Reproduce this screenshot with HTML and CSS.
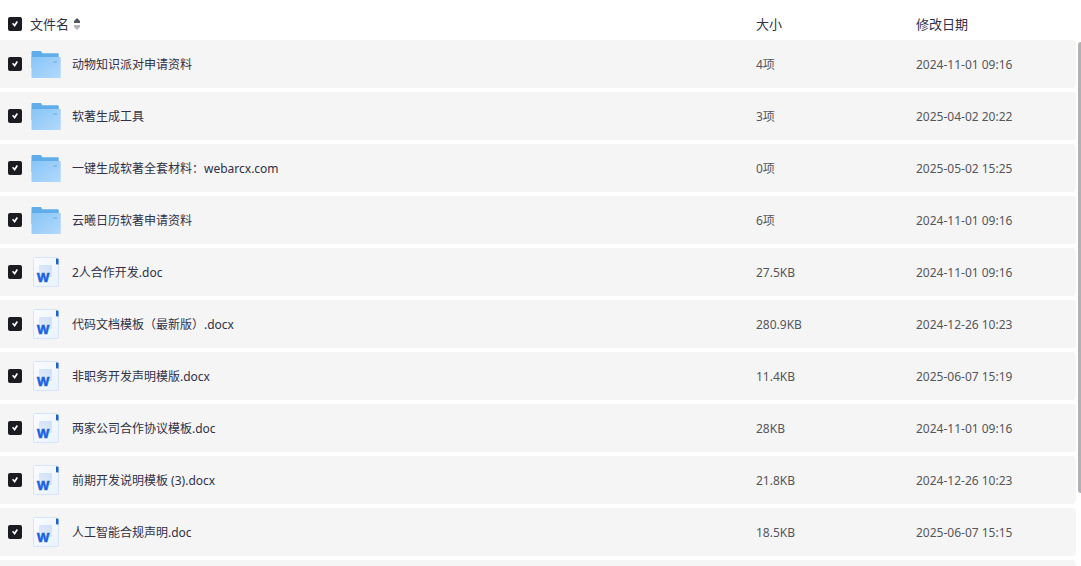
FILE: index.html
```html
<!DOCTYPE html>
<html lang="zh-CN">
<head>
    <meta charset="UTF-8">
    <meta name="viewport" content="width=device-width, initial-scale=1.0">
    <title>文件列表</title>
    <link rel="stylesheet" href="styles.css">
</head>
<body>
    <!-- Shared icons -->
    <svg class="icon-defs" width="0" height="0" aria-hidden="true">
        <defs>
            <linearGradient id="folderFront" x1="0" y1="0" x2="1" y2="1">
                <stop offset="0" stop-color="#88c4f7"/>
                <stop offset="1" stop-color="#b2d9fb"/>
            </linearGradient>
            <linearGradient id="docPage" x1="0" y1="0" x2="1" y2="1">
                <stop offset="0" stop-color="#fafcfe"/>
                <stop offset="1" stop-color="#ebf2fd"/>
            </linearGradient>
            <linearGradient id="docSquare" x1="1" y1="0" x2="0" y2="1">
                <stop offset="0" stop-color="#cfdff7"/>
                <stop offset="1" stop-color="#e4edfb"/>
            </linearGradient>
            <symbol id="folder" viewBox="0 0 32 32">
                <path d="M1.5 4a1 1 0 0 1 1-1h8.3l1.6 2.2h15.3a1 1 0 0 1 1 1V20H1.5z" fill="#60adea"/>
                <path d="M1.5 9H30a.7.7 0 0 1 .7.7v19.6a.7.7 0 0 1-.7.7H2.2a.7.7 0 0 1-.7-.7z" fill="url(#folderFront)"/>
                <path d="M23 13h4v2h-4z" fill="#83bdf0"/>
            </symbol>
            <symbol id="doc" viewBox="0 0 32 32">
                <rect x="3.5" y="1.5" width="25" height="29" rx="1" fill="url(#docPage)" stroke="#d5e4f9"/>
                <path d="M26 2.5h1.5l1 1v5H27a1 1 0 0 1-1-1z" fill="#1e5fc9"/>
                <rect x="9" y="9" width="13" height="12" fill="url(#docSquare)"/>
                <text x="7" y="26" class="doc-letter">W</text>
            </symbol>
        </defs>
    </svg>

    <div class="file-panel">
        <table class="file-table">
            <colgroup>
                <col class="col-check">
                <col>
                <col class="col-size">
                <col class="col-date">
            </colgroup>
            <thead>
                <tr>
                    <th class="check-cell"><input type="checkbox" id="checkAll" checked></th>
                    <th>
                        <div class="head-name">
                            <label for="checkAll">文件名</label>
                            <button type="button" class="sort-button" aria-label="排序">
                                <svg width="8" height="12" viewBox="0 0 8 12">
                                    <path d="M4 0L7 3V5H1V3z" fill="#55565e"/>
                                    <path d="M4 12L7 9V7H1v2z" fill="#b5b5b8"/>
                                </svg>
                            </button>
                        </div>
                    </th>
                    <th>大小</th>
                    <th>修改日期</th>
                </tr>
            </thead>
            <tbody>
                <tr>
                    <td class="check-cell"><input type="checkbox" id="file1" checked></td>
                    <td><div class="file-name"><svg class="file-icon"><use href="#folder"/></svg><label for="file1">动物知识派对申请资料</label></div></td>
                    <td class="info-cell">4项</td>
                    <td class="info-cell">2024-11-01 09:16</td>
                </tr>
                <tr>
                    <td class="check-cell"><input type="checkbox" id="file2" checked></td>
                    <td><div class="file-name"><svg class="file-icon"><use href="#folder"/></svg><label for="file2">软著生成工具</label></div></td>
                    <td class="info-cell">3项</td>
                    <td class="info-cell">2025-04-02 20:22</td>
                </tr>
                <tr>
                    <td class="check-cell"><input type="checkbox" id="file3" checked></td>
                    <td><div class="file-name"><svg class="file-icon"><use href="#folder"/></svg><label for="file3">一键生成软著全套材料：webarcx.com</label></div></td>
                    <td class="info-cell">0项</td>
                    <td class="info-cell">2025-05-02 15:25</td>
                </tr>
                <tr>
                    <td class="check-cell"><input type="checkbox" id="file4" checked></td>
                    <td><div class="file-name"><svg class="file-icon"><use href="#folder"/></svg><label for="file4">云曦日历软著申请资料</label></div></td>
                    <td class="info-cell">6项</td>
                    <td class="info-cell">2024-11-01 09:16</td>
                </tr>
                <tr>
                    <td class="check-cell"><input type="checkbox" id="file5" checked></td>
                    <td><div class="file-name"><svg class="file-icon"><use href="#doc"/></svg><label for="file5">2人合作开发.doc</label></div></td>
                    <td class="info-cell">27.5KB</td>
                    <td class="info-cell">2024-11-01 09:16</td>
                </tr>
                <tr>
                    <td class="check-cell"><input type="checkbox" id="file6" checked></td>
                    <td><div class="file-name"><svg class="file-icon"><use href="#doc"/></svg><label for="file6">代码文档模板（最新版）.docx</label></div></td>
                    <td class="info-cell">280.9KB</td>
                    <td class="info-cell">2024-12-26 10:23</td>
                </tr>
                <tr>
                    <td class="check-cell"><input type="checkbox" id="file7" checked></td>
                    <td><div class="file-name"><svg class="file-icon"><use href="#doc"/></svg><label for="file7">非职务开发声明模版.docx</label></div></td>
                    <td class="info-cell">11.4KB</td>
                    <td class="info-cell">2025-06-07 15:19</td>
                </tr>
                <tr>
                    <td class="check-cell"><input type="checkbox" id="file8" checked></td>
                    <td><div class="file-name"><svg class="file-icon"><use href="#doc"/></svg><label for="file8">两家公司合作协议模板.doc</label></div></td>
                    <td class="info-cell">28KB</td>
                    <td class="info-cell">2024-11-01 09:16</td>
                </tr>
                <tr>
                    <td class="check-cell"><input type="checkbox" id="file9" checked></td>
                    <td><div class="file-name"><svg class="file-icon"><use href="#doc"/></svg><label for="file9">前期开发说明模板 (3).docx</label></div></td>
                    <td class="info-cell">21.8KB</td>
                    <td class="info-cell">2024-12-26 10:23</td>
                </tr>
                <tr>
                    <td class="check-cell"><input type="checkbox" id="file10" checked></td>
                    <td><div class="file-name"><svg class="file-icon"><use href="#doc"/></svg><label for="file10">人工智能合规声明.doc</label></div></td>
                    <td class="info-cell">18.5KB</td>
                    <td class="info-cell">2025-06-07 15:15</td>
                </tr>
                <tr>
                    <td class="check-cell"></td>
                    <td></td>
                    <td></td>
                    <td></td>
                </tr>
            </tbody>
        </table>
        <div class="scroll-track">
            <div class="scroll-thumb"></div>
        </div>
    </div>
</body>
</html>
```
FILE: styles.css
```css
* {
    box-sizing: border-box;
}
body {
    margin: 0;
    font-family: "Noto Sans", "Noto Sans CJK SC", sans-serif;
    font-size: 12px;
    line-height: 16px;
    color: #303048;
    background-color: #ffffff;
}
.icon-defs {
    display: block;
}
.file-panel {
    display: flex;
    align-items: flex-start;
    gap: 2px;
    height: 100vh;
    overflow: hidden;
}
.file-table {
    flex: 1;
    table-layout: fixed;
    border-collapse: separate;
    border-spacing: 0 4px;
}
.col-check {
    width: 30px;
}
.col-size,
.col-date {
    width: 160px;
}
th {
    height: 32px;
    padding: 8px 0 0;
    font-size: 13px;
    font-weight: 400;
    text-align: left;
    vertical-align: middle;
}
td {
    height: 48px;
    padding: 0;
    background-color: #f5f5f5;
    color: #55555c;
    vertical-align: middle;
}
td:last-child {
    border-radius: 0 4px 4px 0;
}
.check-cell {
    padding-left: 8px;
}
.info-cell,
.file-name label {
    padding-top: 2px;
}
.head-name {
    display: flex;
    align-items: center;
    gap: 4px;
}
.sort-button {
    display: flex;
    padding: 0;
    border: none;
    background: none;
    cursor: pointer;
}
.file-name {
    display: flex;
    align-items: center;
    gap: 10px;
    color: #303048;
}
.file-icon {
    width: 32px;
    height: 32px;
}
.doc-letter {
    font-family: "Liberation Sans", sans-serif;
    font-size: 13px;
    font-weight: 700;
    fill: #1a62de;
    stroke: #1a62de;
    stroke-width: 0.6px;
}
input[type="checkbox"] {
    appearance: none;
    display: block;
    width: 14px;
    height: 14px;
    margin: 0;
    padding: 4px;
    border-radius: 2px;
    background-color: #1b1c22;
    cursor: pointer;
}
/* Tick mark */
input[type="checkbox"]:checked::before {
    content: "";
    display: block;
    width: 6px;
    height: 6px;
    background-color: #ffffff;
    clip-path: polygon(0 45%, 20% 30%, 40% 55%, 78% 0, 100% 15%, 45% 100%);
}
/* Scrollbar */
.scroll-track {
    width: 3px;
    height: 100%;
    padding-top: 42px;
}
.scroll-thumb {
    height: 86%;
    border-radius: 3px 0 0 3px;
    background-color: #b0b0b5;
}
```
